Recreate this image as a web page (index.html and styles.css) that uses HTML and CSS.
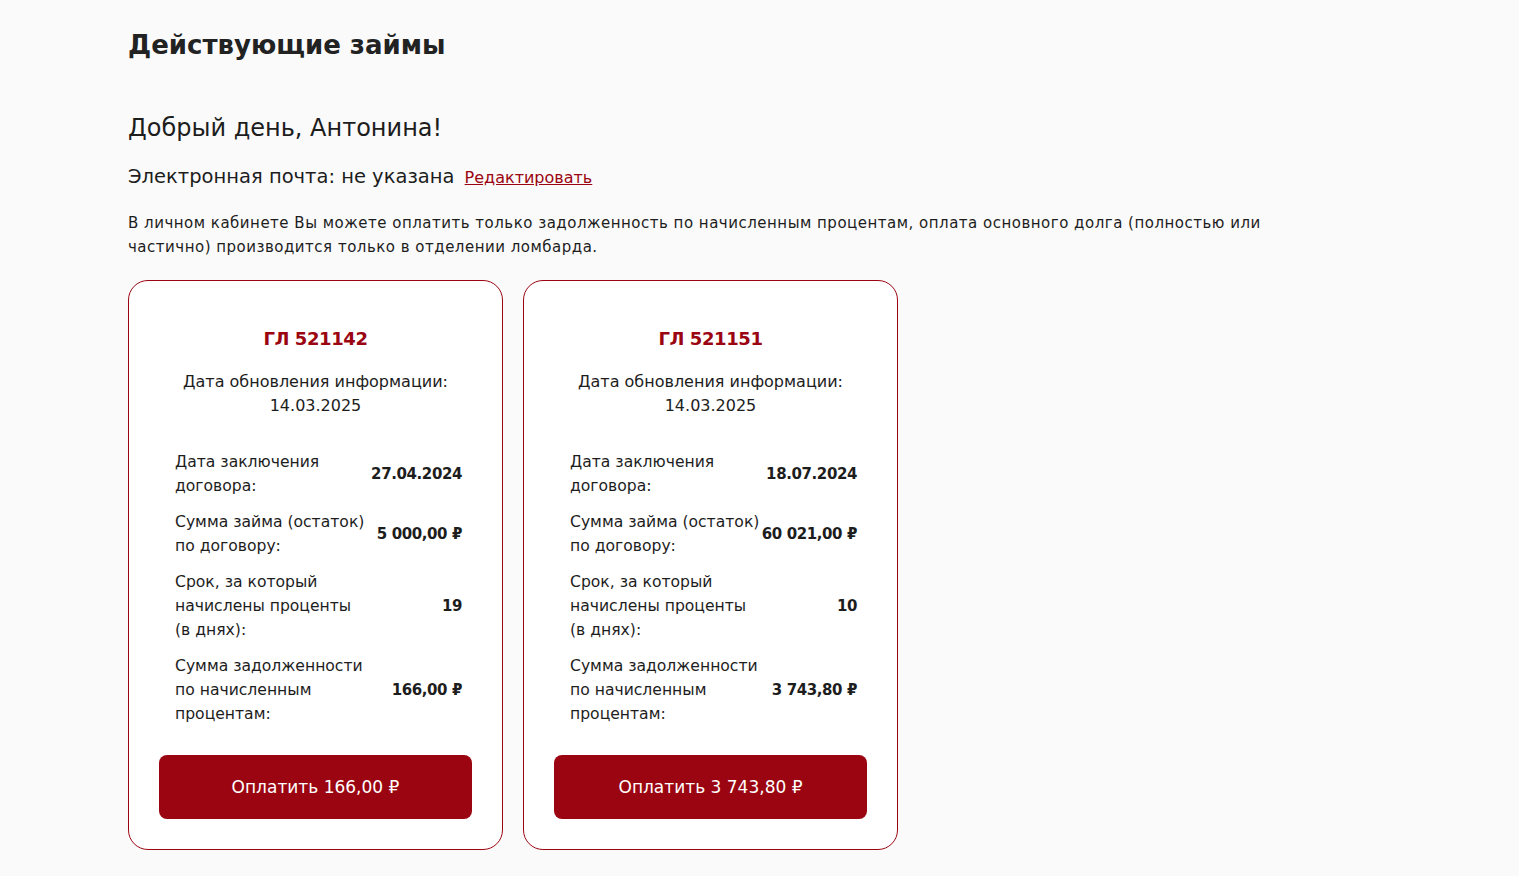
FILE: index.html
```html
<!DOCTYPE html>
<html lang="ru">
<head>
    <meta charset="UTF-8">
    <meta name="viewport" content="width=device-width, initial-scale=1.0">
    <title>Действующие займы</title>
    <link rel="stylesheet" href="styles.css">
</head>
<body>
    <main class="page">
        <h1 class="page-title">Действующие займы</h1>

        <section class="profile">
            <h2 class="greeting">Добрый день, Антонина!</h2>
            <p class="email">
                Электронная почта: не указана
                <a href="#" class="edit-link">Редактировать</a>
            </p>
            <p class="notice">
                В личном кабинете Вы можете оплатить только задолженность по начисленным процентам, оплата основного долга (полностью или частично) производится только в отделении ломбарда.
            </p>
        </section>

        <div class="loans">
            <div class="loan-card">
                <h3 class="loan-number">ГЛ 521142</h3>
                <p class="loan-updated">Дата обновления информации:<br>14.03.2025</p>

                <div class="loan-rows">
                    <div class="loan-label">Дата заключения договора:</div>
                    <div class="loan-value">27.04.2024</div>

                    <div class="loan-label">Сумма займа (остаток) по договору:</div>
                    <div class="loan-value">5 000,00 ₽</div>

                    <div class="loan-label">Срок, за который начислены проценты (в днях):</div>
                    <div class="loan-value">19</div>

                    <div class="loan-label">Сумма задолженности по начисленным процентам:</div>
                    <div class="loan-value">166,00 ₽</div>
                </div>

                <button class="pay-button">Оплатить 166,00 ₽</button>
            </div>

            <div class="loan-card">
                <h3 class="loan-number">ГЛ 521151</h3>
                <p class="loan-updated">Дата обновления информации:<br>14.03.2025</p>

                <div class="loan-rows">
                    <div class="loan-label">Дата заключения договора:</div>
                    <div class="loan-value">18.07.2024</div>

                    <div class="loan-label">Сумма займа (остаток) по договору:</div>
                    <div class="loan-value">60 021,00 ₽</div>

                    <div class="loan-label">Срок, за который начислены проценты (в днях):</div>
                    <div class="loan-value">10</div>

                    <div class="loan-label">Сумма задолженности по начисленным процентам:</div>
                    <div class="loan-value">3 743,80 ₽</div>
                </div>

                <button class="pay-button">Оплатить 3 743,80 ₽</button>
            </div>
        </div>
    </main>
</body>
</html>
```

FILE: styles.css
```css
* {
    margin: 0;
    padding: 0;
    box-sizing: border-box;
}

body {
    background-color: #fafafa;
    color: #1d1d1d;
    font-family: "DejaVu Sans", "Noto Sans", sans-serif;
}

.page {
    width: 1140px;
    margin-left: 128px;
    padding-top: 28px;
}

.page-title {
    font-size: 26px;
    line-height: 34px;
    font-weight: 700;
    color: #222222;
}

.profile {
    margin-top: 52px;
}

.greeting {
    font-size: 24px;
    line-height: 28px;
    font-weight: 400;
}

.email {
    margin-top: 22px;
    font-size: 19.5px;
    line-height: 26px;
}

.edit-link {
    margin-left: 4px;
    font-size: 16px;
    color: #9b0511;
}

.notice {
    margin-top: 20px;
    font-size: 15px;
    line-height: 24px;
    letter-spacing: 0.5px;
}

.loans {
    display: flex;
    gap: 20px;
    margin-top: 21px;
}

.loan-card {
    width: 375px;
    background-color: #ffffff;
    border: 1px solid #9b0511;
    border-radius: 20px;
    padding: 46px 30px 30px;
    text-align: center;
}

.loan-number {
    font-size: 18px;
    line-height: 24px;
    font-weight: 700;
    letter-spacing: -0.4px;
    color: #9b0511;
}

.loan-updated {
    margin-top: 19px;
    font-size: 16px;
    line-height: 24px;
}

.loan-rows {
    display: grid;
    grid-template-columns: 190px 1fr;
    align-items: center;
    row-gap: 12px;
    margin-top: 32px;
    padding: 0 10px 0 16px;
    text-align: left;
}

.loan-label {
    font-size: 15.6px;
    line-height: 24px;
}

.loan-value {
    font-size: 15px;
    font-weight: 700;
    letter-spacing: -0.4px;
    text-align: right;
    white-space: nowrap;
}

.pay-button {
    display: block;
    width: 100%;
    height: 64px;
    margin-top: 29px;
    border: none;
    border-radius: 8px;
    background-color: #9b0511;
    color: #ffffff;
    font-family: inherit;
    font-size: 17px;
    font-weight: 500;
    cursor: pointer;
}
```
